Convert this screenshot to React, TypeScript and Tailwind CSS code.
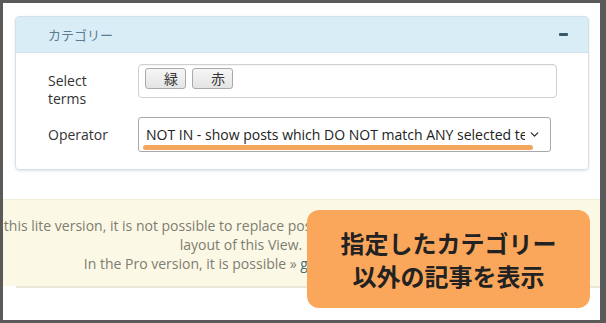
import { ChevronDown } from "lucide-react";

const ui = { fontFamily: '"Open Sans", "Noto Sans CJK JP", sans-serif' };
const jp = { fontFamily: '"Noto Sans CJK JP", "Noto Sans", sans-serif' };

const Tag = ({ label }: { label: string }) => (
  <span
    style={jp}
    className="h-[21px] pl-[18px] pr-[7px] flex items-center text-[14px] text-[#333] border border-[#aaa] rounded-[3px] bg-gradient-to-b from-[#f6f6f6] to-[#e4e4e4]"
  >
    {label}
  </span>
);

const App = () => {
  return (
    <div className="w-[606px] h-[323px] bg-[#5a5a5a] pt-[3px] pl-[3px] pr-[6px] pb-[3px]">
      <div className="relative h-full bg-white overflow-hidden flex flex-col" style={ui}>
        {/* panel */}
        <div className="ml-[12px] mr-[11px] mt-[13px] border border-[#d3e2ea] rounded-[4px] shadow-sm">
          <div className="h-[36px] flex items-center justify-between pl-[32px] pr-[20px] bg-[#d9edf7] border-b border-[#d3e2ea]">
            <span style={jp} className="text-[13px] text-[#5a7d93]">
              カテゴリー
            </span>
            <span className="w-[9px] h-[3px] bg-[#3b5868] rounded-[1px]" />
          </div>

          <div className="pl-[32px] pr-[31px] pt-[11px] pb-[17px] flex flex-col gap-[19px] text-[14px] text-[#333]">
            <div className="flex h-[34px]">
              <span className="w-[90px] pt-[8px] leading-[18px]">
                Select
                <br />
                terms
              </span>
              <div className="flex-1 h-[34px] border border-[#d0d0d0] rounded-[4px] shadow-[inset_0_1px_1px_rgba(0,0,0,0.05)] flex gap-[6px] pl-[6px] pt-[3px]">
                <Tag label="緑" />
                <Tag label="赤" />
              </div>
            </div>

            <div className="flex items-center">
              <span className="w-[90px]">Operator</span>
              <div className="relative w-[413px] h-[35px] border border-[#a8a8a8] rounded-[3px] flex items-center pl-[7px] pr-[9px]">
                <span className="flex-1 whitespace-nowrap overflow-hidden text-[14px] text-[#222]">
                  NOT IN - show posts which DO NOT match ANY selected terms
                </span>
                <ChevronDown size={13} strokeWidth={2.5} className="text-[#333] ml-[3px]" />
                <span className="absolute left-[4px] bottom-[1px] w-[390px] h-[5px] rounded-full bg-[#f2a65e]" />
              </div>
            </div>
          </div>
        </div>

        {/* notice */}
        <div className="mt-[29px] h-[87px] bg-[#fcf8e6] border-t border-[#f3eed8] overflow-hidden">
          <div className="w-[600px] ml-[-62px] pt-[16px] text-center text-[14px] leading-[19px] text-[#7d7d70] whitespace-nowrap">
            In this lite version, it is not possible to replace posts list template in the grid of
            <br />
            layout of this View.
            <br />
            In the Pro version, it is possible »{" "}
            <span className="text-[#3d6f7c]">get it here now</span>
          </div>
        </div>
        <div className="ml-[13px] h-[2px] bg-[#ebe7d8]" />

        {/* callout */}
        <div
          style={jp}
          className="absolute left-[304px] top-[207px] w-[283px] h-[98px] rounded-[12px] bg-[#fba75b] flex flex-col items-center justify-center text-[24px] leading-[33px] font-bold text-[#222]"
        >
          <span>指定したカテゴリー</span>
          <span>以外の記事を表示</span>
        </div>
      </div>
    </div>
  );
};

export default App;
